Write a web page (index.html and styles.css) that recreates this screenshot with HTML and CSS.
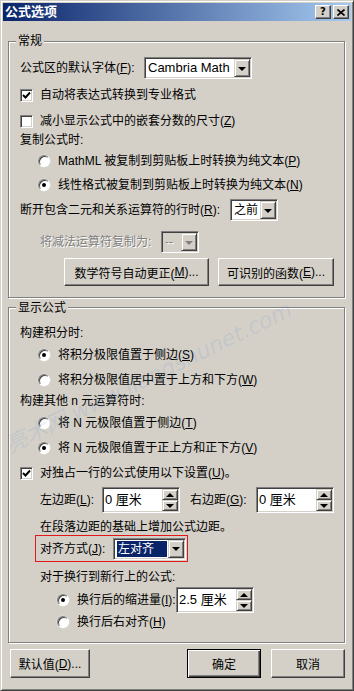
FILE: index.html
```html
<!DOCTYPE html>
<html lang="zh-CN">
<head>
    <meta charset="UTF-8">
    <meta name="viewport" content="width=device-width, initial-scale=1.0">
    <title>公式选项</title>
    <link rel="stylesheet" href="styles.css">
</head>
<body>
    <div class="dialog">
        <div class="titlebar">
            <span class="title">公式选项</span>
            <div class="caption-buttons">
                <span class="cap-btn">?</span>
                <span class="cap-btn">
                    <svg width="8" height="7" viewBox="0 0 8 7"><path d="M0.5 0.5 L7.5 6.5 M7.5 0.5 L0.5 6.5" stroke="#000" stroke-width="1.6"/></svg>
                </span>
            </div>
        </div>

        <div class="content">
            <!-- 常规 -->
            <div class="group general">
                <div class="legend">常规</div>
                <div class="row tall mt9">
                    <span class="label font-label">公式区的默认字体(<u>F</u>):</span>
                    <div class="combo font-combo"><span class="combo-text">Cambria Math</span><span class="drop-btn"></span></div>
                </div>
                <div class="row mt8">
                    <span class="checkbox"><svg width="9" height="9" viewBox="0 0 9 9"><path d="M1 4 L3.5 6.5 L8 1.5" fill="none" stroke="#000" stroke-width="1.9"/></svg></span>
                    <span class="check-text">自动将表达式转换到专业格式</span>
                </div>
                <div class="row mt10">
                    <span class="checkbox"></span>
                    <span class="check-text">减小显示公式中的嵌套分数的尺寸(<u>Z</u>)</span>
                </div>
                <div class="row mt3">复制公式时:</div>
                <div class="row option mt5">
                    <span class="radio"></span>
                    <span class="radio-text">MathML 被复制到剪贴板上时转换为纯文本(<u>P</u>)</span>
                </div>
                <div class="row option mt8">
                    <span class="radio checked"></span>
                    <span class="radio-text">线性格式被复制到剪贴板上时转换为纯文本(<u>N</u>)</span>
                </div>
                <div class="row tall mt6">
                    <span class="label break-label">断开包含二元和关系运算符的行时(<u>R</u>):</span>
                    <div class="combo break-combo"><span class="combo-text">之前</span><span class="drop-btn"></span></div>
                </div>
                <div class="row tall indent mt10 disabled">
                    <span class="label minus-label">将减法运算符复制为:</span>
                    <div class="combo minus-combo"><span class="combo-text">--</span><span class="drop-btn"></span></div>
                </div>
                <div class="button-row mt5">
                    <button class="btn autocorrect-btn">数学符号自动更正(<u>M</u>)...</button>
                    <button class="btn functions-btn">可识别的函数(<u>E</u>)...</button>
                </div>
            </div>

            <!-- 显示公式 -->
            <div class="group display">
                <div class="legend">显示公式</div>
                <div class="row mt10">构建积分时:</div>
                <div class="row option mt6">
                    <span class="radio checked"></span>
                    <span class="radio-text">将积分极限值置于侧边(<u>S</u>)</span>
                </div>
                <div class="row option mt9">
                    <span class="radio"></span>
                    <span class="radio-text">将积分极限值居中置于上方和下方(<u>W</u>)</span>
                </div>
                <div class="row mt5">构建其他 n 元运算符时:</div>
                <div class="row option mt6">
                    <span class="radio"></span>
                    <span class="radio-text">将 N 元极限值置于侧边(<u>T</u>)</span>
                </div>
                <div class="row option mt9">
                    <span class="radio checked"></span>
                    <span class="radio-text">将 N 元极限值置于正上方和正下方(<u>V</u>)</span>
                </div>
                <div class="row mt9">
                    <span class="checkbox"><svg width="9" height="9" viewBox="0 0 9 9"><path d="M1 4 L3.5 6.5 L8 1.5" fill="none" stroke="#000" stroke-width="1.9"/></svg></span>
                    <span class="check-text">对独占一行的公式使用以下设置(<u>U</u>)。</span>
                </div>
                <div class="row spin-row indent mt6">
                    <span class="label margin-label">左边距(<u>L</u>):</span>
                    <div class="spin"><span class="spin-text">0 厘米</span><span class="spin-btns"><span class="spin-btn up"></span><span class="spin-btn down"></span></span></div>
                    <span class="label right-label">右边距(<u>G</u>):</span>
                    <div class="spin"><span class="spin-text">0 厘米</span><span class="spin-btns"><span class="spin-btn up"></span><span class="spin-btn down"></span></span></div>
                </div>
                <div class="row indent mt6">在段落边距的基础上增加公式边距。</div>
                <div class="align-box">
                    <span class="label align-label">对齐方式(<u>J</u>):</span>
                    <div class="combo align-combo"><span class="combo-text"><span class="selected">左对齐</span></span><span class="drop-btn"></span></div>
                </div>
                <div class="row indent mt7">对于换行到新行上的公式:</div>
                <div class="row spin-row sub-option mt2">
                    <span class="radio checked"></span>
                    <span class="radio-text indent-label">换行后的缩进量(<u>I</u>):</span>
                    <div class="spin"><span class="spin-text">2.5 厘米</span><span class="spin-btns"><span class="spin-btn up"></span><span class="spin-btn down"></span></span></div>
                </div>
                <div class="row sub-option mt1">
                    <span class="radio"></span>
                    <span class="radio-text">换行后右对齐(<u>H</u>)</span>
                </div>
            </div>

            <div class="footer">
                <button class="btn footer-btn defaults-btn">默认值(<u>D</u>)...</button>
                <button class="btn footer-btn default ok-btn">确定</button>
                <button class="btn footer-btn">取消</button>
            </div>
        </div>

        <span class="watermark">亮术网 www.liangshunet.com</span>
    </div>
</body>
</html>
```

FILE: styles.css
```css
* {
    margin: 0;
    padding: 0;
    box-sizing: border-box;
}

body {
    background: #d4d0c8;
    font-family: "Liberation Sans", "Noto Sans CJK SC", sans-serif;
    font-size: 12px;
    line-height: 16px;
    color: #000;
}

u {
    text-underline-offset: 1px;
}

.dialog {
    position: relative;
    width: 354px;
    height: 691px;
    padding: 2px;
    border: 1px solid;
    border-color: #d4d0c8 #404040 #404040 #d4d0c8;
    box-shadow: inset 1px 1px #fff, inset -1px -1px #808080;
    overflow: hidden;
}

/* title bar */
.titlebar {
    display: flex;
    align-items: center;
    height: 18px;
    padding: 0 2px 0 2px;
    background: linear-gradient(to right, #0a246a, #a6caf0);
}

.title {
    color: #fff;
    font-weight: bold;
    font-size: 13px;
}

.caption-buttons {
    display: flex;
    gap: 2px;
    margin-left: auto;
}

.cap-btn {
    display: flex;
    justify-content: center;
    align-items: center;
    width: 16px;
    height: 14px;
    background: #d4d0c8;
    border: 1px solid;
    border-color: #fff #404040 #404040 #fff;
    box-shadow: inset -1px -1px #808080;
    font-family: "DejaVu Sans", sans-serif;
    font-weight: bold;
    font-size: 10px;
    line-height: 12px;
}

.content {
    padding: 0 5px;
}

/* group boxes */
.group {
    margin-right: 1px;
    border: 1px solid #808080;
    box-shadow: inset 1px 1px #fff, 1px 1px #fff;
    padding: 0 10px 11px 11px;
}

.group.general {
    margin-top: 20px;
}

.group.display {
    margin-top: 9px;
    padding-bottom: 12px;
}

.legend {
    width: fit-content;
    height: 14px;
    line-height: 14px;
    margin: -8px 0 0 -4px;
    padding: 0 2px;
    background: #d4d0c8;
}

.group.display .legend {
    margin-top: -7px;
}

.row {
    display: flex;
    align-items: center;
    height: 16px;
    white-space: nowrap;
}

.row.tall {
    height: 22px;
}

.row.spin-row {
    height: 26px;
}

.row.indent {
    padding-left: 20px;
}

.row.option {
    padding-left: 18px;
}

.row.sub-option {
    padding-left: 37px;
}

.mt1 { margin-top: 1px; }
.mt2 { margin-top: 2px; }
.mt3 { margin-top: 3px; }
.mt5 { margin-top: 5px; }
.mt6 { margin-top: 6px; }
.mt7 { margin-top: 7px; }
.mt8 { margin-top: 8px; }
.mt9 { margin-top: 9px; }
.mt10 { margin-top: 10px; }

.label {
    flex-shrink: 0;
}

.font-label { width: 124px; }
.break-label { width: 210px; }
.minus-label { width: 121px; }
.margin-label { width: 62px; }
.right-label { width: 66px; margin-left: 10px; }
.align-label { width: 73px; }
.indent-label { width: 99px; }

.disabled {
    color: #808080;
    text-shadow: 1px 1px #fff;
}

/* checkboxes and radios */
.checkbox {
    display: flex;
    justify-content: center;
    align-items: center;
    width: 13px;
    height: 13px;
    flex-shrink: 0;
    background: #fff;
    border: 1px solid;
    border-color: #808080 #fff #fff #808080;
    box-shadow: inset 1px 1px #404040, inset -1px -1px #d4d0c8;
}

.check-text {
    margin-left: 7px;
}

.radio {
    display: flex;
    justify-content: center;
    align-items: center;
    width: 12px;
    height: 12px;
    flex-shrink: 0;
    border-radius: 50%;
    background: #fff;
    border: 1px solid;
    border-color: #808080 #fff #fff #808080;
    box-shadow: inset 1px 1px #404040, 0 0 0 0.5px #e8e6e0;
}

.radio.checked::after {
    content: "";
    width: 4px;
    height: 4px;
    border-radius: 50%;
    background: #000;
}

.radio-text {
    margin-left: 8px;
}

/* combo boxes */
.combo {
    display: flex;
    height: 22px;
    padding: 1px;
    background: #fff;
    border: 1px solid;
    border-color: #808080 #fff #fff #808080;
    box-shadow: inset 1px 1px #404040, inset -1px -1px #d4d0c8;
    flex-shrink: 0;
}

.combo-text {
    flex: 1;
    display: flex;
    align-items: center;
    padding-left: 2px;
    overflow: hidden;
}

.drop-btn,
.spin-btn {
    display: flex;
    justify-content: center;
    align-items: center;
    background: #d4d0c8;
    border: 1px solid;
    border-color: #d4d0c8 #404040 #404040 #d4d0c8;
    box-shadow: inset 1px 1px #fff, inset -1px -1px #808080;
}

.drop-btn {
    width: 16px;
}

.drop-btn::after {
    content: "";
    border-left: 4px solid transparent;
    border-right: 4px solid transparent;
    border-top: 4px solid #000;
    margin-top: 1px;
}

.font-combo { width: 108px; }
.font-combo .combo-text { font-size: 13px; }
.break-combo { width: 48px; }
.minus-combo { width: 38px; background: #d4d0c8; }
.minus-combo .drop-btn::after { border-top-color: #808080; }
.align-combo { width: 73px; }

.selected {
    display: inline-block;
    width: 50px;
    height: 16px;
    padding-left: 1px;
    background: #0a246a;
    color: #fff;
    text-shadow: none;
}

.align-box {
    display: flex;
    align-items: center;
    width: 153px;
    height: 27px;
    margin-left: 15px;
    padding-left: 4px;
    border: 1px solid #e01818;
    white-space: nowrap;
}

/* spin boxes */
.spin {
    display: flex;
    width: 78px;
    height: 26px;
    padding: 1px;
    flex-shrink: 0;
    background: #fff;
    border: 1px solid;
    border-color: #808080 #fff #fff #808080;
    box-shadow: inset 1px 1px #404040, inset -1px -1px #d4d0c8;
}

.spin-text {
    flex: 1;
    display: flex;
    align-items: center;
    padding-left: 1px;
    font-size: 13px;
}

.spin-btns {
    display: flex;
    flex-direction: column;
    justify-content: center;
    width: 16px;
}

.spin-btn {
    height: 11px;
}

.spin-btn.up::after {
    content: "";
    border-left: 4px solid transparent;
    border-right: 4px solid transparent;
    border-bottom: 4px solid #000;
}

.spin-btn.down::after {
    content: "";
    border-left: 4px solid transparent;
    border-right: 4px solid transparent;
    border-top: 4px solid #000;
}

/* push buttons */
.btn {
    display: flex;
    justify-content: center;
    align-items: center;
    height: 28px;
    background: #d4d0c8;
    border: 1px solid;
    border-color: #fff #404040 #404040 #fff;
    box-shadow: inset -1px -1px #808080;
    font-family: inherit;
    font-size: 12px;
    color: #000;
    white-space: nowrap;
}

.btn.default {
    border-color: #000;
    box-shadow: inset 1px 1px #fff, inset -1px -1px #404040, inset -2px -2px #808080;
}

.button-row {
    display: flex;
    gap: 9px;
    padding-left: 44px;
}

.autocorrect-btn { width: 145px; }
.functions-btn { width: 116px; }

.footer {
    display: flex;
    gap: 10px;
    margin-top: 6px;
    padding: 0 1px 0 2px;
}

.footer-btn {
    width: 74px;
    height: 29px;
}

.defaults-btn {
    width: 80px;
}

.ok-btn {
    margin-left: auto;
}

/* faint site watermark over the dialog */
.watermark {
    position: absolute;
    left: 6px;
    top: 432px;
    transform: rotate(-26deg);
    transform-origin: left center;
    font-family: "DejaVu Sans", "Noto Sans CJK SC", sans-serif;
    font-style: italic;
    font-size: 22px;
    line-height: 28px;
    color: rgba(90, 140, 215, 0.15);
    white-space: nowrap;
    pointer-events: none;
}
```
